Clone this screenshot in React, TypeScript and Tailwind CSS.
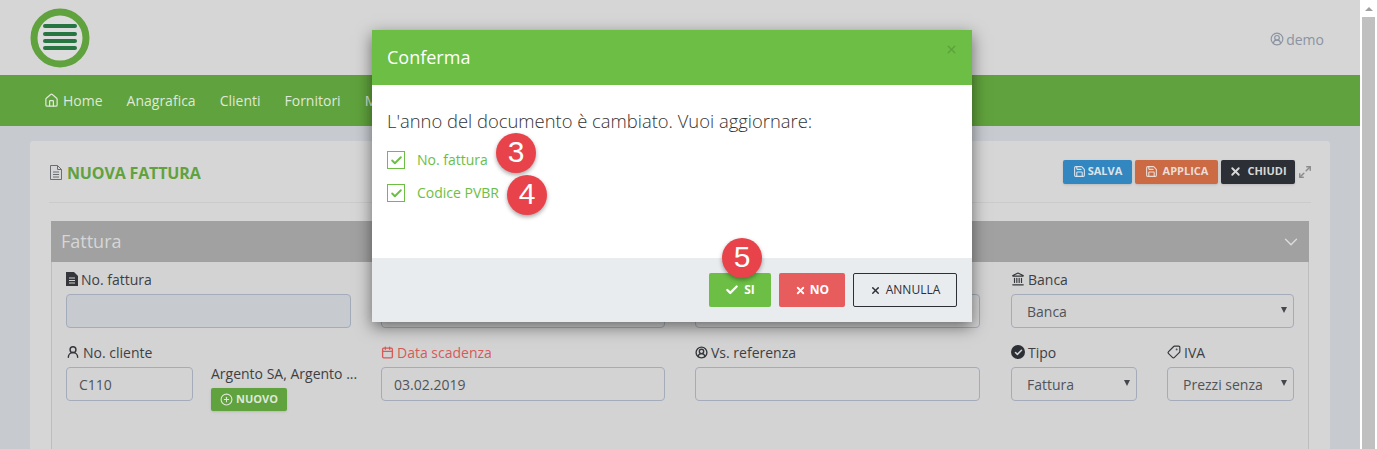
import { Calendar, Check, ChevronDown, CirclePlus, CircleUserRound, Home, Landmark, Maximize2, Save, Tag, UserRound, X } from "lucide-react";
import { ReactNode } from "react";

const fieldBox = "h-[34px] rounded-[4px] border border-[#a4acbb] px-[12px] flex items-center text-[14px] text-[#50535a]";

const Label = ({ icon, text, className = "" }: { icon?: ReactNode; text?: string; className?: string }) => (
  <div className={`flex items-center gap-[3px] h-[20px] mb-[5px] text-[14px] text-[#3d3f45] ${className}`}>
    {icon}
    {text}
  </div>
);

const SelectBox = ({ text, className = "" }: { text: string; className?: string }) => (
  <div className={`${fieldBox} justify-between pl-[15px] pr-[6px] ${className}`}>
    <span>{text}</span>
    <span className="w-0 h-0 border-x-[3px] border-t-[6px] border-x-transparent border-t-[#45474c] mb-[2px]" />
  </div>
);

const Badge = ({ n, className }: { n: string; className: string }) => (
  <div className={`absolute w-[40px] h-[40px] rounded-full bg-[#e8434a] text-white text-[30px] leading-[38px] text-center shadow-[0_2px_4px_rgba(0,0,0,0.35)] font-['Liberation_Sans',sans-serif] ${className}`}>
    {n}
  </div>
);

const Logo = () => (
  <svg width="60" height="60" viewBox="0 0 60 60">
    <circle cx="30" cy="30" r="26" fill="#dcdcdc" stroke="#60a23d" strokeWidth="7" />
    {[18, 26, 33, 40].map((y) => (
      <rect key={y} x="13" y={y - 2} width="34" height="4" rx="2" fill="#277541" />
    ))}
  </svg>
);

const DocFill = () => (
  <svg width="12" height="14" viewBox="0 0 12 14">
    <path d="M0 0h8l4 4v10H0z" fill="#34363b" />
    <path d="M3 6h6M3 8.5h6M3 11h6" stroke="#d3d3d3" strokeWidth="1" />
  </svg>
);

const CheckBox = () => (
  <div className="w-[18px] h-[18px] border border-[#6cbe45] flex items-center justify-center">
    <Check size={13} strokeWidth={3.5} className="text-[#6cbe45]" />
  </div>
);

export default function App() {
  return (
    <div className="relative w-[1377px] h-[449px] overflow-hidden flex bg-white font-['Open_Sans',sans-serif]">
      <div className="w-[1360px] h-full flex flex-col bg-[#c7cbd0]">
        <header className="h-[75px] flex-none bg-[#d6d6d6] flex items-center justify-between pl-[30px] pr-[36px]">
          <Logo />
          <div className="flex items-center gap-[2px] text-[14px] text-[#8b93a3] mt-[3px]">
            <CircleUserRound size={14} />
            demo
          </div>
        </header>

        <nav className="h-[51px] flex-none bg-[#60a23d] flex items-center gap-[24px] pl-[44px] text-[14px] text-[#dfe8d8]">
          <span className="flex items-center gap-[4px]">
            <Home size={15} />
            Home
          </span>
          <span>Anagrafica</span>
          <span>Clienti</span>
          <span>Fornitori</span>
          <span>Magazzino</span>
        </nav>

        <main className="flex-1 pt-[15px] px-[30px]">
          <div className="w-[1300px] h-[320px] bg-[#d6d6d6] rounded-[3px] px-[19px]">
            <div className="h-[62px] flex items-center justify-between border-b border-[#cbcbcb]">
              <div className="flex items-center gap-[5px] pl-[1px] pt-[2px]">
                <svg width="12" height="15" viewBox="0 0 12 15" fill="none" stroke="#6c6c74" strokeWidth="1">
                  <path d="M.5.5h7l4 4v10H.5zM7.5.5v4h4M3 7h6M3 9.5h6M3 12h6" />
                </svg>
                <h1 className="text-[16px] font-bold text-[#60a23d] tracking-[-0.15px]">NUOVA FATTURA</h1>
              </div>
              <div className="flex items-center gap-[3px]">
                <button className="h-[24px] w-[69px] rounded-[2px] bg-[#3287c0] text-[#dbe3ea] text-[11px] font-bold flex items-center justify-center gap-[2px] shadow-sm">
                  <Save size={13} />
                  SALVA
                </button>
                <button className="h-[24px] w-[83px] rounded-[2px] bg-[#cc6a44] text-[#ecdcd4] text-[11px] font-bold flex items-center justify-center gap-[5px] shadow-sm">
                  <Save size={13} />
                  APPLICA
                </button>
                <button className="h-[24px] w-[74px] rounded-[2px] bg-[#2c2f36] text-[#d8d8d8] text-[11px] font-bold flex items-center justify-center gap-[5px] shadow-sm">
                  <X size={13} strokeWidth={3.5} />
                  CHIUDI
                </button>
                <Maximize2 size={14} strokeWidth={2.5} className="text-[#8c8c8c] mr-[-1px]" />
              </div>
            </div>

            <section className="mt-[18px] mx-[2px] w-[1258px]">
              <div className="h-[41px] bg-[#a1a1a1] flex items-center justify-between pl-[10px] pr-[7px] text-[18px] text-[#d6d6d6]">
                Fattura
                <ChevronDown size={22} strokeWidth={1.5} className="text-[#dcdcdc]" />
              </div>
              <div className="h-[200px] bg-[#d3d3d3] border-x border-[#bdbdbd] px-[14px] pt-[7px] grid grid-cols-[285px_284px_286px_283px] gap-x-[30px] content-start">
                <div className="h-[73px]">
                  <Label icon={<DocFill />} text="No. fattura" />
                  <div className={`${fieldBox} bg-[#c7cbd0]`} />
                </div>
                <div>
                  <Label />
                  <div className={fieldBox} />
                </div>
                <div className="mr-[1px]">
                  <Label />
                  <div className={fieldBox} />
                </div>
                <div>
                  <Label icon={<Landmark size={14} className="text-[#34363b]" />} text="Banca" />
                  <SelectBox text="Banca" />
                </div>

                <div className="flex">
                  <div className="w-[127px] flex-none">
                    <Label icon={<UserRound size={14} strokeWidth={2.5} className="text-[#34363b]" />} text="No. cliente" />
                    <div className={fieldBox}>C110</div>
                  </div>
                  <div className="ml-[18px] pt-[22px] min-w-0">
                    <div className="text-[14px] leading-[20px] text-[#3d3f45] whitespace-nowrap">Argento SA, Argento ...</div>
                    <button className="mt-[4px] h-[23px] w-[76px] rounded-[2px] bg-[#60a23d] text-[#dfe8d8] text-[11px] font-bold flex items-center justify-center gap-[3px] shadow-sm">
                      <CirclePlus size={13} />
                      NUOVO
                    </button>
                  </div>
                </div>
                <div>
                  <Label
                    icon={<Calendar size={13} strokeWidth={2.5} className="text-[#d65a5a]" />}
                    text="Data scadenza"
                    className="!text-[#d65a5a]"
                  />
                  <div className={fieldBox}>03.02.2019</div>
                </div>
                <div className="mr-[1px]">
                  <Label icon={<CircleUserRound size={13} strokeWidth={2.5} className="text-[#34363b]" />} text="Vs. referenza" />
                  <div className={fieldBox} />
                </div>
                <div className="flex gap-[30px]">
                  <div className="w-[126px]">
                    <Label
                      icon={
                        <span className="w-[14px] h-[14px] rounded-full bg-[#2c2f36] flex items-center justify-center">
                          <Check size={9} strokeWidth={4} className="text-[#d3d3d3]" />
                        </span>
                      }
                      text="Tipo"
                    />
                    <SelectBox text="Fattura" />
                  </div>
                  <div className="w-[127px]">
                    <Label icon={<Tag size={14} className="text-[#34363b] -scale-x-100" />} text="IVA" />
                    <SelectBox text="Prezzi senza" />
                  </div>
                </div>
              </div>
            </section>
          </div>
        </main>
      </div>

      {/* scrollbar */}
      <div className="w-[17px] h-full bg-white px-[2px] flex flex-col items-center">
        <div className="h-[17px] flex items-center justify-center">
          <span className="w-0 h-0 border-x-[4px] border-b-[4px] border-x-transparent border-b-[#a0a0a0]" />
        </div>
        <div className="flex-1 w-full bg-[#c0c0c0]" />
      </div>

      {/* modal */}
      <div className="absolute left-[372px] top-[30px] w-[600px] h-[292px] bg-white flex flex-col shadow-[0_5px_15px_rgba(0,0,0,0.5)]">
        <div className="h-[55px] flex-none bg-[#6cbe45] flex items-center justify-between pl-[15px] pr-[14px] text-white text-[18px]">
          Conferma
          <X size={13} strokeWidth={2.5} className="text-[#5ba339] -mt-[16px]" />
        </div>
        <div className="flex-1 pl-[15px] pt-[25px]">
          <p className="text-[18.4px] leading-[22px] font-light text-[#333] mb-[19px]">
            L'anno del documento è cambiato. Vuoi aggiornare:
          </p>
          <div className="flex flex-col gap-[15px]">
            <div className="flex items-center gap-[12px] text-[14px] leading-[18px] text-[#6cbe45]">
              <CheckBox />
              No. fattura
            </div>
            <div className="flex items-center gap-[12px] text-[14px] leading-[18px] text-[#6cbe45]">
              <CheckBox />
              Codice PVBR
            </div>
          </div>
        </div>
        <div className="h-[64px] flex-none bg-[#e9ecef] flex items-center justify-end gap-[8px] pr-[15px]">
          <button className="h-[34px] w-[62px] rounded-[2px] bg-[#6cbe45] text-white text-[12px] font-bold flex items-center justify-center gap-[5px]">
            <Check size={14} strokeWidth={4} />
            SI
          </button>
          <button className="h-[34px] w-[66px] rounded-[2px] bg-[#e75c5c] text-white text-[12px] font-bold flex items-center justify-center gap-[4px]">
            <X size={11} strokeWidth={4} />
            NO
          </button>
          <button className="h-[34px] w-[104px] rounded-[2px] border border-[#2c2f36] text-[#2c2f36] text-[12px] font-medium flex items-center justify-center gap-[5px]">
            <X size={11} strokeWidth={3} />
            ANNULLA
          </button>
        </div>
      </div>

      <Badge n="3" className="left-[496px] top-[133px]" />
      <Badge n="4" className="left-[507px] top-[175px]" />
      <Badge n="5" className="left-[722px] top-[238px]" />
    </div>
  );
}
